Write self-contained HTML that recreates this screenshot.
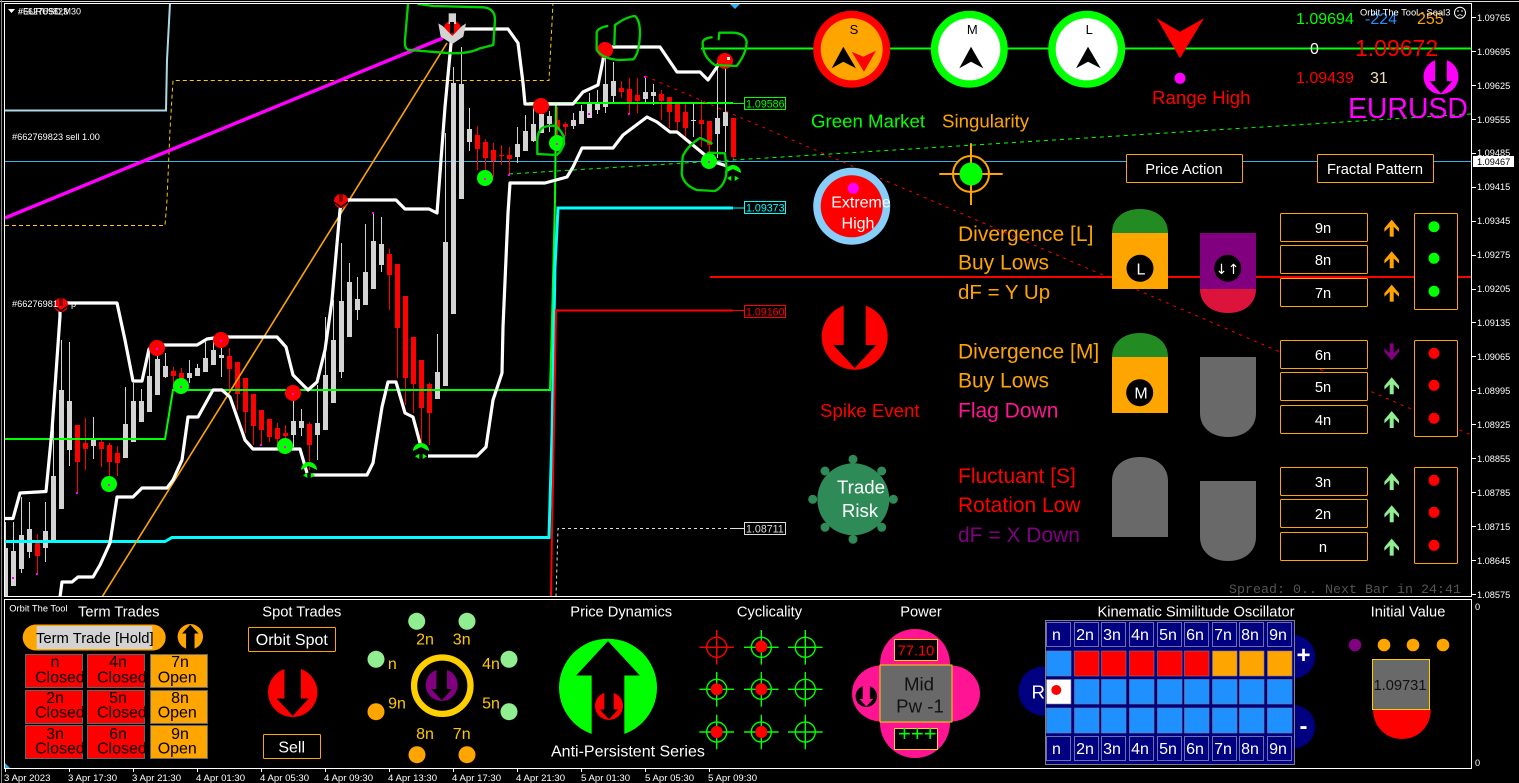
<!DOCTYPE html>
<html><head><meta charset="utf-8"><style>
html,body{margin:0;padding:0;background:#000;width:1519px;height:783px;overflow:hidden}
svg{display:block}
text{font-family:"Liberation Sans",sans-serif;fill:#fff}
.t15{font-size:14.67px}.t16{font-size:16px}.t19{font-size:18.67px}.t21{font-size:21px}
.ax{font-size:9.2px}.tm{font-size:9.6px}
.m{text-anchor:middle}
.or{fill:#ffa500}.rd{fill:#f00}.gd{fill:#ffc800}.bk{fill:#000}
.btn{fill:#000;stroke:#ffa500;stroke-width:1}
</style></head><body>
<svg width="1519" height="783" viewBox="0 0 1519 783" xmlns="http://www.w3.org/2000/svg">
<defs>
<clipPath id="ch"><rect x="5" y="4" width="1466" height="592"/></clipPath>
<polygon id="da" points="-.333,-1.1 .333,-1.1 .333,.25 .65,.25 0,.95 -.65,.25 -.333,.25"/>
<polygon id="ua" points="0,-8.7 7.3,0 7.3,3.5 2,-1.5 2,8.3 -2,8.3 -2,-1.5 -7.3,3.5 -7.3,0"/>
<g id="gm"><path d="M-8,0A8,8 0 0 1 8,0L0,-4Z" fill="#0f0"/><path d="M-6,5.3L-1.7,2.7V8ZM6,5.3L1.7,2.7V8Z" fill="#0f0"/></g>
<g id="rm"><circle r="7" fill="#f00"/><path d="M-1,-7V1M1,-7V1" stroke="#000" stroke-width="1"/><path d="M-7,1L0,6L7,1" stroke="#000" stroke-width="1.5" fill="none"/></g>
<g id="cg"><circle r="10" fill="none" stroke="#0f0" stroke-width="1.4"/><path d="M-17.3,0H17.3M0,-17.3V17.3" stroke="#0f0" stroke-width="1.4"/></g>
</defs>
<rect width="1519" height="783" fill="#000"/>
<!-- frames -->
<path d="M0,1.5H1519" stroke="#ddd" stroke-width="1"/>
<path d="M1.5,0V783" stroke="#888" stroke-width="1"/>
<path d="M4.5,3.5H1471.5V596.5H4.5Z" fill="none" stroke="#fff" stroke-width="1"/>
<path d="M4.5,599.5H1471.5V768.5H4.5Z" fill="none" stroke="#fff" stroke-width="1"/>
<!-- chart -->
<g clip-path="url(#ch)">
<path d="M5,161.5H1471" stroke="#34b4e8" stroke-width="1"/>
<!-- candles gray -->
<g shape-rendering="crispEdges" fill="none">
<path stroke="#d3d3d3" stroke-width="1" d="M5.5 522V597M13.5 522V586M21.5 497V573M29.5 502V558M45.5 502V562M53.5 423V540M61.5 340V509M69.5 342V466M93.5 417V459M125.5 387V458M133.5 383V442M141.5 389V422M149.5 348V412M157.5 348V395M165.5 353V378M189.5 360V383M197.5 364V376M205.5 342V372M213.5 338V365M221.5 340V377M293.5 397V447M301.5 409V436M317.5 385V460M325.5 317V430M333.5 300V403M341.5 243V378M349.5 263V337M357.5 277V320M365.5 224V304M373.5 213V289M381.5 217V272M437.5 334V399M445.5 133V386M453.5 67V314M461.5 47V199M469.5 108V151M517.5 127V163M525.5 115V151M533.5 108V142M541.5 107V133M549.5 111V132M573.5 113V129M581.5 105V124M589.5 93V118M597.5 90V114M605.5 58V113M613.5 62V104M645.5 76V104M653.5 84V105M693.5 103V137M717.5 68V158M725.5 68V152"/>
<path stroke="#d3d3d3" stroke-width="5" d="M5.5 548V597M13.5 551V586M21.5 535V569M29.5 529V552M45.5 531V548M53.5 476V540M61.5 390V509M69.5 401V450M93.5 439V446M125.5 424V458M133.5 401V442M141.5 401V422M149.5 376V412M157.5 359V395M165.5 366V377M189.5 373V378M197.5 368V376M205.5 358V372M213.5 350V365M221.5 355V358M293.5 421V435M301.5 421V428M317.5 423V435M325.5 375V430M333.5 340V403M341.5 301V372M349.5 282V337M357.5 299V310M365.5 272V305M373.5 241V289M381.5 244V265M437.5 372V399M445.5 242V386M453.5 83V314M461.5 84V199M469.5 129V142M517.5 144V157M525.5 131V151M533.5 124V141M541.5 114V133M549.5 116V124M573.5 120V126M581.5 111V124M589.5 102V118M597.5 102V110M605.5 84V107M613.5 81V96M645.5 92V99M653.5 92V96M693.5 120V121M717.5 118V134M725.5 112V126"/>
<path stroke="#f00" stroke-width="1" d="M37.5 534V574M77.5 425V493M85.5 418V470M101.5 438V467M109.5 443V477M117.5 446V476M173.5 367V390M181.5 368V393M229.5 348V390M237.5 362V410M245.5 378V433M253.5 394V445M261.5 410V445M269.5 419V442M277.5 423V448M285.5 425V447M309.5 422V470M389.5 249V310M397.5 264V378M405.5 296V405M413.5 337V413M421.5 360V443M429.5 383V445M477.5 126V170M485.5 139V177M493.5 143V177M501.5 145V165M509.5 147V175M557.5 107V137M565.5 122V136M621.5 81V98M629.5 78V114M637.5 78V113M661.5 90V120M669.5 97V128M677.5 103V130M685.5 103V138M701.5 100V147M709.5 121V157M733.5 118V160"/>
<path stroke="#f00" stroke-width="5" d="M37.5 540V556M77.5 425V462M85.5 443V449M101.5 442V449M109.5 445V462M117.5 453V463M173.5 371V376M181.5 373V380M229.5 356V369M237.5 362V394M245.5 378V412M253.5 394V426M261.5 410V430M269.5 419V437M277.5 428V439M285.5 433V436M309.5 424V445M389.5 254V275M397.5 264V328M405.5 296V378M413.5 337V384M421.5 360V408M429.5 384V413M477.5 135V149M485.5 142V158M493.5 150V161M501.5 155V156M509.5 155V159M557.5 120V130M565.5 124V127M621.5 88V92M629.5 89V102M637.5 95V101M661.5 94V101M669.5 97V112M677.5 104V122M685.5 112V128M701.5 120V124M709.5 121V145M733.5 118V157"/>
</g>
<!-- level lines -->
<path d="M5,110.5H166L167,60L170,3" fill="none" stroke="#add8e6" stroke-width="2"/>
<path d="M5,225.5H165L167,200L170,130L173,80.5H549L553,3" fill="none" stroke="#ffc800" stroke-width="1" stroke-dasharray="4 3"/>
<path d="M5,439H165L173,390H550L552,320L555,200L556,103" fill="none" stroke="#0f0" stroke-width="2"/>
<path d="M529,103H733" fill="none" stroke="#0f0" stroke-width="2"/><path d="M733,103.5H745" stroke="#0f0" stroke-width="1"/>
<path d="M701,48.5H1471" stroke="#0f0" stroke-width="2"/>
<path d="M5,541.5H165L172,537.5H549L552,433L555,267L558,208H733" fill="none" stroke="#0ff" stroke-width="3"/>
<path d="M733,208H745" stroke="#0ff" stroke-width="1"/>
<path d="M733,310.5H558L556,310L553,483L552,530L551,597" fill="none" stroke="#f00" stroke-width="2"/><path d="M733,310.5H745" stroke="#f00" stroke-width="1"/>
<path d="M733,528.5H558L556,597" fill="none" stroke="#ddd" stroke-width="1" stroke-dasharray="3 3"/>
<path d="M733,528.5H745" stroke="#ddd" stroke-width="1"/>
<path d="M710,277H1471" stroke="#f00" stroke-width="2"/>
<path d="M645,76L1471,435" stroke="#f00" stroke-width="1" stroke-dasharray="3 5"/>
<path d="M509,174L1471,114" stroke="#0f0" stroke-width="1" stroke-dasharray="4 4"/>
<path d="M5,218L443,38" stroke="#f0f" stroke-width="3.4"/>
<path d="M102,597L447,43" stroke="#ffa500" stroke-width="1.6"/>
<!-- white bands -->
<g fill="none" stroke="#fff" stroke-width="3.2" stroke-linejoin="round">
<path d="M5,518.5H13L20,493L46,491.5L52,430L60,316V303H117L125,340L133,381H142L149,349L157,345H197L207,339L221,337H277L286,347L293,375L308,390L317,382L325,350L332,300L340,210L342,200H396L405,209H429L437,213L445,107L452,33V29H508L518,43L523,83L525,104H573L583,92L598,85L603,60L605,47H660L677,72H700L708,80L717,67L720,60"/>
<path d="M60,597L62,582H72L78,577H93L100,565L110,543L117,497H133L142,488H167L173,480L182,460L188,417H198L213,390H222L230,397L245,440L253,449H300L307,473"/>
<path d="M312,475H367L373,463L382,407L388,382H396L405,413L413,417L420,443"/>
<path d="M428,456H477L486,447L493,400L502,373L503,327L508,213L510,183H545L567,177L573,167L582,148H613L623,135L647,117L657,122L670,132H677L705,155L708,160L727,166"/>
</g>
<!-- dots -->
<g fill="#f00"><circle cx="157" cy="348" r="8"/><circle cx="221" cy="340" r="8"/><circle cx="293" cy="393" r="8"/><circle cx="541" cy="106" r="8"/><circle cx="605" cy="50" r="8"/><circle cx="725" cy="61" r="8"/></g>
<g fill="#0f0"><circle cx="181" cy="386" r="8"/><circle cx="109" cy="484" r="8"/><circle cx="285" cy="446" r="8"/><circle cx="485" cy="178" r="8"/><circle cx="557" cy="143" r="8"/><circle cx="709" cy="161" r="8"/></g>
<g fill="#f0f"><rect x="156" y="348" width="2" height="2"/><rect x="220" y="340" width="2" height="2"/><rect x="292" y="393" width="2" height="2"/><rect x="180" y="386" width="2" height="2"/><rect x="108" y="484" width="2" height="2"/><rect x="284" y="446" width="2" height="2"/><rect x="484" y="178" width="2" height="2"/><rect x="556" y="143" width="2" height="2"/><rect x="708" y="161" width="2" height="2"/><rect x="76" y="492" width="2" height="2"/><rect x="12" y="577" width="2" height="2"/><rect x="36" y="573" width="2" height="2"/><rect x="260" y="444" width="2" height="2"/><rect x="372" y="212" width="2" height="2"/><rect x="628" y="113" width="2" height="2"/><rect x="508" y="174" width="2" height="2"/><rect x="588" y="113" width="2" height="2"/><rect x="644" y="76" width="2" height="2"/></g>
<rect x="727" y="57" width="3" height="3" fill="#fff"/>
<use href="#rm" x="341" y="201"/><use href="#rm" x="61" y="305"/>
<use href="#gm" x="309" y="470"/><use href="#gm" x="421" y="451"/><use href="#gm" x="733" y="173"/>
<g transform="translate(400 0) scale(.3333)">
<circle cx="157" cy="88" r="26" fill="#f00"/><rect x="146" y="40" width="22" height="32" fill="#d3d3d3"/><rect x="150" y="66" width="12" height="34" fill="#000"/>
<polygon points="115,70 128,78 157,108 186,78 198,70 190,110 157,132 122,110" fill="#d3d3d3"/>
</g>
<!-- scribbles -->
<g transform="translate(400 0) scale(.3333)" fill="none" stroke="#00d400" stroke-width="7" stroke-linejoin="round" stroke-linecap="round">
<path d="M25,0L15,120Q12,150 30,150L130,158Q200,165 240,145L280,135L285,60Q285,25 250,22L100,18L55,12"/>
<path d="M622,78Q590,85 590,100V150Q610,178 660,180L700,178Q718,160 720,100Q720,60 705,48Q680,50 645,75L643,135"/>
<path d="M935,112Q908,115 908,130Q908,170 945,195L1010,198Q1040,160 1040,125Q1035,100 1000,98H958L956,118"/>
<path d="M470,378Q440,375 425,385Q412,400 412,420V462L470,465Q492,450 492,410Q485,395 470,380"/>
<path d="M935,430L900,414Q860,440 848,470L845,520Q850,555 890,570L945,573Q980,555 980,505L975,460L925,458"/>
</g>
<polygon points="730,4 740,4 735,9" fill="#30b0f0"/>
<!-- labels on chart -->
<text x="18" y="14.5" style="font-size:9px" fill="#fff">#EURUSD,M30</text>
<text x="18" y="14.5" style="font-size:9px" fill="#fff">#662769823</text>
<polygon points="8,9 15,9 11.5,13" fill="#fff"/>
<text x="12" y="140" style="font-size:9.2px">#662769823 sell 1.00</text>
<text x="12" y="307" style="font-size:9.2px">#66276981</text>
<text x="71" y="307" style="font-size:9.2px">p</text>
<rect x="744.5" y="97.5" width="41" height="12" fill="#000" stroke="#0f0"/><text x="746" y="107.5" style="font-size:10.67px;fill:#0f0">1.09586</text>
<rect x="744.5" y="201.5" width="41" height="12" fill="#000" stroke="#0ff"/><text x="746" y="211.5" style="font-size:10.67px;fill:#0ff">1.09373</text>
<rect x="744.5" y="305.5" width="41" height="12" fill="#000" stroke="#f00"/><text x="746" y="315.5" style="font-size:10.67px;fill:#f00">1.09160</text>
<rect x="744.5" y="522.5" width="41" height="12" fill="#000" stroke="#ddd"/><text x="746" y="532.5" style="font-size:10.67px;fill:#ddd">1.08711</text>
<text x="1229" y="593" style="font-family:'Liberation Mono',monospace;font-size:13.33px;fill:#555">Spread: 0.. Next Bar in 24:41</text>
</g>
<!-- top circles -->
<circle cx="851.7" cy="49.3" r="38.5" fill="#f00"/><circle cx="851.7" cy="49.3" r="31" fill="#ffa500"/>
<polygon points="843.3,46.7 831.7,68.3 843.3,61.7 856,68.3" fill="#000"/>
<polygon points="851.7,51.7 863.3,56.7 876,50.7 864,71.7" fill="#f00"/>
<text x="854" y="34" class="m bk" style="font-size:13px">S</text>
<circle cx="969.3" cy="49.3" r="38.5" fill="#0f0"/><circle cx="969.3" cy="49.3" r="31" fill="#fff"/>
<polygon points="971,46.7 959.3,68.3 971,61.7 983.3,68.3" fill="#000"/>
<text x="972.3" y="34" class="m bk" style="font-size:13px">M</text>
<circle cx="1086.7" cy="49.3" r="38.5" fill="#0f0"/><circle cx="1086.7" cy="49.3" r="31" fill="#fff"/>
<polygon points="1088,46.7 1076,68.3 1088,61.7 1100.7,68.3" fill="#000"/>
<text x="1089.3" y="34" class="m bk" style="font-size:13px">L</text>
<polygon points="1156.7,18.3 1180,31.7 1204,18.3 1180,58.3" fill="#f00"/>
<circle cx="1180" cy="78.3" r="5.5" fill="#f0f"/>
<text x="1152" y="104" class="t19 rd">Range High</text>
<text x="811" y="127.5" class="t19" style="fill:#0f0">Green Market</text>
<text x="942" y="127.5" class="t19 or">Singularity</text>
<!-- crosshair -->
<circle cx="971" cy="174" r="18" fill="#000" stroke="#ffa500" stroke-width="2"/>
<path d="M939.3,174H1002.7M971,143.3V205" stroke="#ffa500" stroke-width="2"/>
<circle cx="971" cy="174" r="11.5" fill="#0f0"/>
<!-- extreme -->
<circle cx="851.7" cy="206.3" r="38.5" fill="#87cefa"/><circle cx="851.7" cy="206.3" r="31" fill="#f00"/>
<circle cx="853.3" cy="188.3" r="5.5" fill="#f0f"/>
<text x="861" y="207.5" class="m" style="font-size:16px">Extreme</text>
<text x="858" y="228.5" class="m" style="font-size:16px">High</text>
<!-- spike -->
<g transform="translate(854.7 336.7) scale(33)"><circle r="1" fill="#f00"/><use href="#da" fill="#000"/></g>
<text x="820" y="417" class="t19 rd">Spike Event</text>
<!-- trade risk -->
<g fill="#2e8b57"><circle cx="853.3" cy="499.3" r="36"/><circle cx="853" cy="459.3" r="4.5"/><circle cx="825" cy="471" r="4.5"/><circle cx="881.7" cy="471" r="4.5"/><circle cx="812.7" cy="499.3" r="4.5"/><circle cx="893.3" cy="499.3" r="4.5"/><circle cx="825" cy="527.3" r="4.5"/><circle cx="881.7" cy="527.3" r="4.5"/><circle cx="853" cy="539.3" r="4.5"/></g>
<text x="861" y="493.5" class="m t19">Trade</text><text x="860" y="517" class="m t19">Risk</text>
<!-- text block -->
<text x="958" y="241" class="t21 or">Divergence [L]</text>
<text x="958" y="269.5" class="t21 or">Buy Lows</text>
<text x="958" y="299" class="t21 or" style="font-size:20.5px">dF = Y Up</text>
<text x="958" y="358.5" class="t21 or">Divergence [M]</text>
<text x="958" y="387.5" class="t21 or">Buy Lows</text>
<text x="958" y="417.5" class="t21" style="fill:#ff1493">Flag Down</text>
<text x="958" y="483" class="t21 rd">Fluctuant [S]</text>
<text x="958" y="512" class="t21 rd">Rotation Low</text>
<text x="958" y="542" class="t21" style="fill:#800080">dF = X Down</text>
<!-- domes -->
<path d="M1112,233C1112,218 1124,209 1140,209C1156,209 1168,218 1168,233Z" fill="#228b22"/>
<rect x="1112" y="233" width="56" height="56" fill="#ffa500"/>
<circle cx="1140" cy="268.3" r="13.5" fill="#000"/><text x="1141" y="274.3" class="m t16">L</text>
<rect x="1200" y="233" width="56" height="56" fill="#800080"/>
<path d="M1200,289C1200,304 1212,313 1228,313C1244,313 1256,304 1256,289Z" fill="#dc143c"/>
<circle cx="1227.7" cy="268.3" r="13.5" fill="#000"/>
<text x="1221.5" y="274" class="m" style="font-family:'DejaVu Sans',sans-serif;font-size:14px;fill:#fff">↓</text><text x="1233.5" y="274" class="m" style="font-family:'DejaVu Sans',sans-serif;font-size:14px;fill:#fff">↑</text>
<path d="M1112,357C1112,342 1124,333 1140,333C1156,333 1168,342 1168,357Z" fill="#228b22"/>
<rect x="1112" y="357" width="56" height="56" fill="#ffa500"/>
<circle cx="1139.7" cy="392.7" r="13.5" fill="#000"/><text x="1141" y="398.5" class="m t16">M</text>
<path d="M1200,357H1256V413C1256,428 1244,437 1228,437C1212,437 1200,428 1200,413Z" fill="#696969"/>
<path d="M1112,537V481C1112,466 1124,457 1140,457C1156,457 1168,466 1168,481V537Z" fill="#696969"/>
<path d="M1200,481H1256V537C1256,552 1244,561 1228,561C1212,561 1200,552 1200,537Z" fill="#696969"/>
<!-- buttons top -->
<rect x="1126.5" y="154.5" width="116" height="28" rx="1" class="btn"/><text x="1184" y="174" class="m t15">Price Action</text>
<rect x="1317.5" y="154.5" width="116" height="28" rx="1" class="btn"/><text x="1375" y="174" class="m t15">Fractal Pattern</text>
<!-- n buttons -->
<g class="btn">
<rect x="1280.5" y="213.5" width="87" height="28" rx="1"/><rect x="1280.5" y="245.5" width="87" height="28" rx="1"/><rect x="1280.5" y="278.5" width="87" height="28" rx="1"/>
<rect x="1280.5" y="340.5" width="87" height="28" rx="1"/><rect x="1280.5" y="372.5" width="87" height="28" rx="1"/><rect x="1280.5" y="405.5" width="87" height="28" rx="1"/>
<rect x="1280.5" y="467.5" width="87" height="28" rx="1"/><rect x="1280.5" y="499.5" width="87" height="28" rx="1"/><rect x="1280.5" y="532.5" width="87" height="28" rx="1"/>
<rect x="1414.5" y="213.5" width="43" height="96" rx="1"/><rect x="1414.5" y="340.5" width="43" height="96" rx="1"/><rect x="1414.5" y="467.5" width="43" height="96" rx="1"/>
</g>
<g class="m t15" text-anchor="middle">
<text x="1323" y="233">9n</text><text x="1323" y="265">8n</text><text x="1323" y="298">7n</text>
<text x="1323" y="360">6n</text><text x="1323" y="392">5n</text><text x="1323" y="425">4n</text>
<text x="1323" y="487">3n</text><text x="1323" y="519">2n</text><text x="1323" y="552">n</text>
</g>
<g fill="#ffa500"><use href="#ua" x="1391.7" y="228.3"/><use href="#ua" x="1391.7" y="260"/><use href="#ua" x="1391.7" y="293.3"/></g>
<g transform="translate(1391.7 351.7) scale(1 -1)" fill="#800080"><use href="#ua"/></g>
<g fill="#90ee90"><use href="#ua" x="1391.7" y="386"/><use href="#ua" x="1391.7" y="419.7"/><use href="#ua" x="1391.7" y="481.7"/><use href="#ua" x="1391.7" y="514"/><use href="#ua" x="1391.7" y="547.3"/></g>
<g fill="#0f0"><circle cx="1434" cy="226.7" r="5.5"/><circle cx="1434" cy="258.3" r="5.5"/><circle cx="1434" cy="291.3" r="5.5"/></g>
<g fill="#f00"><circle cx="1434" cy="353.3" r="5.5"/><circle cx="1434" cy="385.3" r="5.5"/><circle cx="1434" cy="418.3" r="5.5"/><circle cx="1434" cy="480.3" r="5.5"/><circle cx="1434" cy="512.3" r="5.5"/><circle cx="1434" cy="545.3" r="5.5"/></g>
<!-- top right -->
<text x="1296" y="24" class="t16" style="fill:#0f0">1.09694</text>
<text x="1365" y="24" class="t16" style="fill:#1e90ff">-224</text>
<text x="1417" y="24" class="t16 or">255</text>
<text x="1360" y="15.5" style="font-size:9.33px">Orbit The Tool - Seal3</text>
<circle cx="1460" cy="12.7" r="5.5" fill="none" stroke="#fff" stroke-width="1"/><circle cx="1458" cy="11" r=".8" fill="#fff"/><circle cx="1462" cy="11" r=".8" fill="#fff"/><path d="M1457.5,16Q1460,13.5 1462.5,16" stroke="#fff" fill="none" stroke-width=".8"/>
<text x="1310" y="54" class="t16">0</text>
<text x="1355" y="56" class="rd" style="font-size:23px">1.09672</text>
<text x="1296" y="83" class="t16 rd">1.09439</text>
<text x="1370" y="83" class="t16" style="fill:#f5deb3">31</text>
<g transform="translate(1441 76.7) scale(17.5)"><circle r="1" fill="#f0f"/><use href="#da" fill="#000"/></g>
<text x="1348" y="118" style="font-size:28.4px;fill:#f0f">EURUSD</text>
<!-- right axis -->
<path d="M1472,17.5h4M1472,51.5h4M1472,85.5h4M1472,119.5h4M1472,153.5h4M1472,187.5h4M1472,221.5h4M1472,255.5h4M1472,289.5h4M1472,322.5h4M1472,356.5h4M1472,390.5h4M1472,424.5h4M1472,458.5h4M1472,492.5h4M1472,526.5h4M1472,560.5h4M1472,594.5h4" stroke="#fff"/>
<g class="ax">
<text x="1477" y="21">1.09765</text><text x="1477" y="55">1.09695</text><text x="1477" y="89">1.09625</text><text x="1477" y="123">1.09555</text><text x="1477" y="156">1.09485</text><text x="1477" y="190">1.09415</text><text x="1477" y="224">1.09345</text><text x="1477" y="258">1.09275</text><text x="1477" y="292">1.09205</text><text x="1477" y="326">1.09135</text><text x="1477" y="360">1.09065</text><text x="1477" y="394">1.08995</text><text x="1477" y="428">1.08925</text><text x="1477" y="462">1.08855</text><text x="1477" y="496">1.08785</text><text x="1477" y="530">1.08715</text><text x="1477" y="564">1.08645</text><text x="1477" y="598">1.08575</text>
<text x="1475" y="610">0</text><text x="1475" y="766">0</text>
</g>
<rect x="1473" y="156" width="41" height="11" fill="#fff"/><text x="1477" y="165" class="ax bk">1.09467</text>
<!-- time axis -->
<path d="M5.5,769v3M69.5,769v3M133.5,769v3M197.5,769v3M261.5,769v3M325.5,769v3M389.5,769v3M453.5,769v3M517.5,769v3M581.5,769v3M645.5,769v3M709.5,769v3" stroke="#fff"/>
<g class="tm">
<text x="4" y="781">3 Apr 2023</text><text x="68" y="781">3 Apr 17:30</text><text x="132" y="781">3 Apr 21:30</text><text x="196" y="781">4 Apr 01:30</text><text x="260" y="781">4 Apr 05:30</text><text x="324" y="781">4 Apr 09:30</text><text x="388" y="781">4 Apr 13:30</text><text x="452" y="781">4 Apr 17:30</text><text x="516" y="781">4 Apr 21:30</text><text x="581" y="781">5 Apr 01:30</text><text x="645" y="781">5 Apr 05:30</text><text x="708" y="781">5 Apr 09:30</text>
</g>
<polygon points="5,763 10,768 5,768" fill="#30b0f0"/>
<!-- bottom panel -->
<text x="9.3" y="611.5" style="font-size:9.33px">Orbit The Tool</text>
<text x="78" y="616.7" class="t15">Term Trades</text>
<text x="262.3" y="616.7" class="t15">Spot Trades</text>
<text x="570.3" y="616.7" class="t15">Price Dynamics</text>
<text x="769.5" y="616.7" class="t15 m">Cyclicality</text>
<text x="921" y="616.7" class="t15 m">Power</text>
<text x="1196" y="616.7" class="t15 m">Kinematic Similitude Oscillator</text>
<text x="1408" y="616.7" class="t15 m">Initial Value</text>
<!-- term trade -->
<rect x="22.7" y="624.5" width="143" height="26" rx="13" fill="#ffa500"/>
<rect x="36.7" y="626" width="115.6" height="23" fill="#d3d3d3"/>
<text x="36" y="643" class="t15 bk" style="font-size:14.8px">Term Trade [Hold]</text>
<g transform="translate(190.3 636.7) scale(12.7 -12.7)"><circle r="1" fill="#ffa500"/><use href="#da" fill="#000"/></g>
<g stroke="#666" stroke-width="1">
<rect x="25.5" y="654.5" width="57" height="33" fill="#f00"/><rect x="87.5" y="654.5" width="57" height="33" fill="#f00"/><rect x="150.5" y="654.5" width="57" height="33" fill="#ffa500"/>
<rect x="25.5" y="690.5" width="57" height="33" fill="#f00"/><rect x="87.5" y="690.5" width="57" height="33" fill="#f00"/><rect x="150.5" y="690.5" width="57" height="33" fill="#ffa500"/>
<rect x="25.5" y="725.5" width="57" height="33" fill="#f00"/><rect x="87.5" y="725.5" width="57" height="33" fill="#f00"/><rect x="150.5" y="725.5" width="57" height="33" fill="#ffa500"/>
</g>
<g class="t16 bk">
<text x="55" y="667" class="m bk">n</text><text x="35" y="682.3" class="bk">Closed</text>
<text x="118" y="667" class="m bk">4n</text><text x="97" y="682.3" class="bk">Closed</text>
<text x="180" y="667" class="m bk">7n</text><text x="157.7" y="682.3" class="bk">Open</text>
<text x="55" y="703" class="m bk">2n</text><text x="35" y="717.7" class="bk">Closed</text>
<text x="118" y="703" class="m bk">5n</text><text x="97" y="717.7" class="bk">Closed</text>
<text x="180" y="703" class="m bk">8n</text><text x="157.7" y="717.7" class="bk">Open</text>
<text x="55" y="739" class="m bk">3n</text><text x="35" y="753.7" class="bk">Closed</text>
<text x="118" y="739" class="m bk">6n</text><text x="97" y="753.7" class="bk">Closed</text>
<text x="180" y="739" class="m bk">9n</text><text x="157.7" y="753.7" class="bk">Open</text>
</g>
<!-- spot -->
<rect x="248.5" y="627.5" width="87" height="24" rx="1" class="btn"/><text x="291.8" y="645" class="m t16">Orbit Spot</text>
<g transform="translate(292.7 692.3) scale(24.7)"><circle r="1" fill="#f00"/><use href="#da" fill="#000"/></g>
<rect x="263.5" y="734.5" width="57" height="24" rx="1" class="btn"/><text x="291.7" y="752.3" class="m t16">Sell</text>
<!-- orbit -->
<g fill="#90ee90"><circle cx="416.7" cy="621.3" r="8.5"/><circle cx="467" cy="621.3" r="8.5"/><circle cx="376" cy="659.3" r="8.5"/><circle cx="509" cy="659.3" r="8.5"/><circle cx="509" cy="711.7" r="8.5"/></g>
<g fill="#ffa500"><circle cx="376" cy="711.7" r="8.5"/><circle cx="417" cy="754.7" r="8.5"/><circle cx="467" cy="754.7" r="8.5"/></g>
<g class="t16">
<text x="425" y="644.3" class="m t16 gd">2n</text><text x="461.7" y="644.3" class="m t16 gd">3n</text><text x="392.3" y="669" class="m t16 gd">n</text><text x="491" y="669" class="m t16 gd">4n</text><text x="397" y="708.3" class="m t16 gd">9n</text><text x="491" y="708.3" class="m t16 gd">5n</text><text x="425" y="739" class="m t16 gd">8n</text><text x="461.7" y="739" class="m t16 gd">7n</text>
</g>
<circle cx="442.3" cy="685.7" r="28.2" fill="none" stroke="#ffd000" stroke-width="6.3"/>
<g transform="translate(441.7 685) scale(16)"><circle r="1" fill="#800080"/><use href="#da" fill="#000"/></g>
<!-- price dynamics -->
<g transform="translate(608 687.7) scale(49 -49)"><circle r="1" fill="#0f0"/><use href="#da" fill="#000"/></g>
<g transform="translate(609 706) scale(14)"><circle r="1" fill="#f00"/><use href="#da" fill="#000"/></g>
<text x="551" y="756.7" class="t16">Anti-Persistent Series</text>
<!-- cyclicality -->
<g><circle cx="716.7" cy="647.3" r="10" fill="none" stroke="#f00" stroke-width="1.4"/><path d="M699.4,647.3H734M716.7,630V664.6" stroke="#f00" stroke-width="1.4"/></g>
<use href="#cg" x="761.3" y="647.3"/><use href="#cg" x="805.3" y="647.3"/><use href="#cg" x="716.7" y="689.3"/><use href="#cg" x="761.3" y="689.3"/><use href="#cg" x="805.3" y="689.3"/><use href="#cg" x="716.7" y="732"/><use href="#cg" x="761.3" y="732"/><use href="#cg" x="805.3" y="732"/>
<g fill="#f00"><circle cx="761.3" cy="646.5" r="6"/><circle cx="716.7" cy="689.3" r="6"/><circle cx="761.3" cy="689.3" r="6"/><circle cx="716.7" cy="732" r="6"/><circle cx="761.3" cy="732" r="6"/></g>
<!-- power -->
<g fill="#ff1493"><ellipse cx="915" cy="664" rx="35" ry="35"/><ellipse cx="915" cy="723" rx="35" ry="35"/><ellipse cx="881" cy="693.5" rx="29" ry="28"/><ellipse cx="951" cy="693.5" rx="29" ry="28"/></g>
<rect x="880" y="665" width="72" height="57" fill="#696969" stroke="#ffd000" stroke-width="1"/>
<rect x="894.5" y="639.5" width="43" height="21" fill="#000" stroke="#ffd000"/><text x="916" y="655.7" class="m t15 rd">77.10</text>
<rect x="894.5" y="728.5" width="43" height="21" fill="#000" stroke="#ffd000"/><text x="898" y="741" style="font-size:22px;fill:#0f0">+++</text>
<text x="919" y="690.7" class="m t19" style="fill:#111">Mid</text><text x="920" y="712.7" class="m t19" style="fill:#111">Pw -1</text>
<g transform="translate(866.3 696.3) scale(10.7)"><circle r="1" fill="#000"/><use href="#da" fill="#ff1493"/></g>
<!-- KSO -->
<circle cx="1043" cy="691" r="24.5" fill="#000080"/><circle cx="1293.5" cy="656.7" r="21.7" fill="#000080"/><circle cx="1293.5" cy="726.7" r="21.7" fill="#000080"/>
<text x="1031.5" y="698.3" class="t19">R</text>
<rect x="1045.5" y="620.5" width="249" height="144" fill="#000080" stroke="#808080"/>
<text x="1303.5" y="663" class="m" style="font-size:24px;font-weight:bold">+</text>
<text x="1303.5" y="734" class="m" style="font-size:24px;font-weight:bold">-</text>
<g fill="#000080" stroke="#7070a8" stroke-width="1">
<rect x="1046.5" y="622.5" width="24" height="24"/><rect x="1074.5" y="622.5" width="24" height="24"/><rect x="1101.5" y="622.5" width="24" height="24"/><rect x="1129.5" y="622.5" width="24" height="24"/><rect x="1157.5" y="622.5" width="24" height="24"/><rect x="1184.5" y="622.5" width="24" height="24"/><rect x="1212.5" y="622.5" width="24" height="24"/><rect x="1239.5" y="622.5" width="24" height="24"/><rect x="1267.5" y="622.5" width="24" height="24"/>
<rect x="1046.5" y="736.5" width="24" height="24"/><rect x="1074.5" y="736.5" width="24" height="24"/><rect x="1101.5" y="736.5" width="24" height="24"/><rect x="1129.5" y="736.5" width="24" height="24"/><rect x="1157.5" y="736.5" width="24" height="24"/><rect x="1184.5" y="736.5" width="24" height="24"/><rect x="1212.5" y="736.5" width="24" height="24"/><rect x="1239.5" y="736.5" width="24" height="24"/><rect x="1267.5" y="736.5" width="24" height="24"/>
</g>
<g fill="#1e90ff" stroke="#808080" stroke-width=".6">
<rect x="1046.5" y="651" width="24.5" height="25"/>
<rect x="1074.5" y="651" width="24.5" height="25" fill="#f00"/><rect x="1101.5" y="651" width="24.5" height="25" fill="#f00"/><rect x="1129.5" y="651" width="24.5" height="25" fill="#f00"/><rect x="1157.5" y="651" width="24.5" height="25" fill="#f00"/><rect x="1184.5" y="651" width="24.5" height="25" fill="#f00"/>
<rect x="1212.5" y="651" width="24.5" height="25" fill="#ffa500"/><rect x="1239.5" y="651" width="24.5" height="25" fill="#ffa500"/><rect x="1267.5" y="651" width="24.5" height="25" fill="#ffa500"/>
<rect x="1046.5" y="679.5" width="24.5" height="24.5" fill="#fff"/>
<rect x="1074.5" y="679.5" width="24.5" height="24.5"/><rect x="1101.5" y="679.5" width="24.5" height="24.5"/><rect x="1129.5" y="679.5" width="24.5" height="24.5"/><rect x="1157.5" y="679.5" width="24.5" height="24.5"/><rect x="1184.5" y="679.5" width="24.5" height="24.5"/><rect x="1212.5" y="679.5" width="24.5" height="24.5"/><rect x="1239.5" y="679.5" width="24.5" height="24.5"/><rect x="1267.5" y="679.5" width="24.5" height="24.5"/>
<rect x="1046.5" y="708" width="24.5" height="25"/><rect x="1074.5" y="708" width="24.5" height="25"/><rect x="1101.5" y="708" width="24.5" height="25"/><rect x="1129.5" y="708" width="24.5" height="25"/><rect x="1157.5" y="708" width="24.5" height="25"/><rect x="1184.5" y="708" width="24.5" height="25"/><rect x="1212.5" y="708" width="24.5" height="25"/><rect x="1239.5" y="708" width="24.5" height="25"/><rect x="1267.5" y="708" width="24.5" height="25"/>
</g>
<circle cx="1056.3" cy="690" r="5" fill="#f00"/>
<g>
<text x="1056.5" y="640" class="m t16">n</text><text x="1085" y="640" class="m t16">2n</text><text x="1112" y="640" class="m t16">3n</text><text x="1140" y="640" class="m t16">4n</text><text x="1168" y="640" class="m t16">5n</text><text x="1195" y="640" class="m t16">6n</text><text x="1223" y="640" class="m t16">7n</text><text x="1250" y="640" class="m t16">8n</text><text x="1278" y="640" class="m t16">9n</text>
<text x="1056.5" y="754" class="m t16">n</text><text x="1085" y="754" class="m t16">2n</text><text x="1112" y="754" class="m t16">3n</text><text x="1140" y="754" class="m t16">4n</text><text x="1168" y="754" class="m t16">5n</text><text x="1195" y="754" class="m t16">6n</text><text x="1223" y="754" class="m t16">7n</text><text x="1250" y="754" class="m t16">8n</text><text x="1278" y="754" class="m t16">9n</text>
</g>
<!-- initial value -->
<circle cx="1355" cy="645" r="6.3" fill="#800080"/><g fill="#ffa500"><circle cx="1384" cy="645" r="6.3"/><circle cx="1413" cy="645" r="6.3"/><circle cx="1443" cy="645" r="6.3"/></g>
<path d="M1373,709.3H1430.7C1430.7,727 1418,739 1402,739C1386,739 1373,727 1373,709.3Z" fill="#f00"/>
<rect x="1372.5" y="659.5" width="57" height="50" fill="#696969" stroke="#ffd000"/>
<text x="1400" y="690" class="m t15" style="fill:#111">1.09731</text>
</svg>
</body></html>
